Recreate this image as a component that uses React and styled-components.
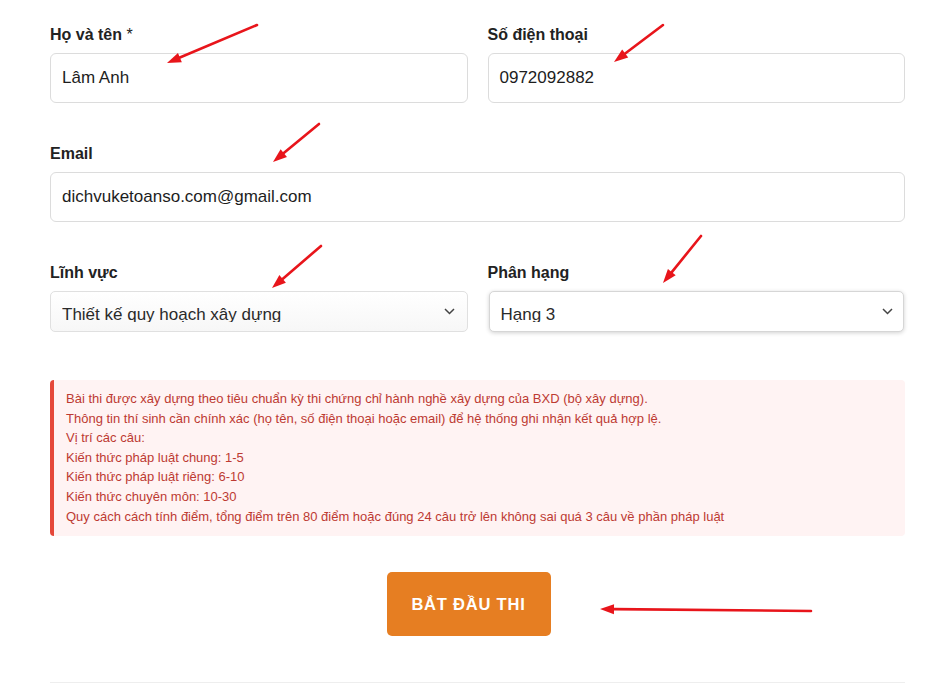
import React from "react";
import styled, { createGlobalStyle } from "styled-components";

const GlobalStyle = createGlobalStyle`
  body {
    margin: 0;
    background: #fff;
    font-family: "Liberation Sans", Arial, sans-serif;
  }
`;

const Page = styled.div`
  position: relative;
  width: 952px;
  height: 685px;
  overflow: hidden;
`;

const Form = styled.div`
  width: 855px;
  margin-left: 50px;
  padding-top: 24px;
`;

const Row = styled.div`
  display: grid;
  grid-template-columns: ${p => (p.$cols === 2 ? "1fr 1fr" : "1fr")};
  column-gap: 20px;
  margin-bottom: ${p => p.$gap ?? 40}px;
`;

const Field = styled.div`
  display: flex;
  flex-direction: column;
`;

const Label = styled.label`
  font-size: 16px;
  line-height: 21px;
  font-weight: 700;
  color: #222;
  margin-bottom: 8px;
`;

const Required = styled.span`
  font-weight: 400;
`;

const Input = styled.div`
  height: 50px;
  box-sizing: border-box;
  border: 1px solid #dcdcdc;
  border-radius: 6px;
  padding: 0 11px;
  display: flex;
  align-items: center;
  font-size: 17px;
  color: #1d1d1d;
`;

const SelectBox = styled.div`
  height: 41px;
  box-sizing: border-box;
  border: 1px solid ${p => (p.$focused ? "#d6d6d6" : "#e0e0e0")};
  border-radius: 5px;
  padding: 0 ${p => (p.$focused ? 10 : 12)}px 0 11px;
  display: flex;
  align-items: flex-start;
  justify-content: space-between;
  background: ${p => (p.$focused ? "#fff" : "linear-gradient(#fff, #f7f7f7)")};
  box-shadow: ${p => (p.$focused ? "0 1px 4px rgba(0,0,0,0.18)" : "none")};
  margin-left: ${p => (p.$focused ? "1px" : "0")};
  margin-right: ${p => (p.$focused ? "1px" : "0")};
`;

const SelectValue = styled.span`
  margin-top: 13px;
  height: 17px;
  line-height: 20px;
  overflow: hidden;
  font-size: 17px;
  color: #2a2a2a;
`;

const Chevron = styled.svg`
  margin-top: 16px;
  flex: none;
`;

const Notice = styled.div`
  margin-top: 48px;
  background: #fff3f3;
  border-left: 4px solid #e5483a;
  border-radius: 4px;
  padding: 9px 12px 10px;
  font-size: 13px;
  line-height: 19.6px;
  color: #bd3a32;
`;

const Actions = styled.div`
  display: flex;
  justify-content: center;
  margin-top: 36px;
  padding-right: 18px;
`;

const StartButton = styled.button`
  width: 164px;
  height: 64px;
  border: none;
  border-radius: 5px;
  background: #e67e22;
  color: #fff;
  font-family: "Liberation Sans", Arial, sans-serif;
  font-size: 16.5px;
  font-weight: 700;
  letter-spacing: 0.8px;
  text-transform: uppercase;
`;

const Divider = styled.hr`
  margin: 46px 0 0;
  border: none;
  border-top: 1px solid #eeeeee;
`;

const Overlay = styled.svg`
  position: absolute;
  top: 0;
  left: 0;
  pointer-events: none;
`;

const arrows = [
  [257, 25, 167, 63],
  [663, 25, 614, 62],
  [319, 124, 273, 162],
  [321, 246, 272, 288],
  [701, 236, 663, 283],
  [811, 611, 600, 609],
];

const Arrow = ({ x1, y1, x2, y2 }) => {
  const a = Math.atan2(y2 - y1, x2 - x1);
  const len = 14;
  const w = 5;
  const bx = x2 - len * Math.cos(a);
  const by = y2 - len * Math.sin(a);
  const px = -Math.sin(a) * w;
  const py = Math.cos(a) * w;
  return (
    <g>
      <line x1={x1} y1={y1} x2={bx} y2={by} stroke="#e8151b" strokeWidth="2.6" strokeLinecap="round" />
      <polygon
        points={`${x2},${y2} ${bx + px},${by + py} ${bx - px},${by - py}`}
        fill="#e8151b"
      />
    </g>
  );
};

const ChevronDown = () => (
  <Chevron width="11" height="7" viewBox="0 0 11 7">
    <polyline points="1,1 5.5,5.5 10,1" fill="none" stroke="#444" strokeWidth="1.5" />
  </Chevron>
);

const notes = [
  "Bài thi được xây dựng theo tiêu chuẩn kỳ thi chứng chỉ hành nghề xây dựng của BXD (bộ xây dựng).",
  "Thông tin thí sinh cần chính xác (họ tên, số điện thoại hoặc email) để hệ thống ghi nhận kết quả hợp lệ.",
  "Vị trí các câu:",
  "Kiến thức pháp luật chung: 1-5",
  "Kiến thức pháp luật riêng: 6-10",
  "Kiến thức chuyên môn: 10-30",
  "Quy cách cách tính điểm, tổng điểm trên 80 điểm hoặc đúng 24 câu trở lên không sai quá 3 câu về phần pháp luật",
];

export default function App() {
  return (
    <Page>
      <GlobalStyle />
      <Form>
        <Row $cols={2}>
          <Field>
            <Label>
              Họ và tên <Required>*</Required>
            </Label>
            <Input>Lâm Anh</Input>
          </Field>
          <Field>
            <Label>Số điện thoại</Label>
            <Input>0972092882</Input>
          </Field>
        </Row>
        <Row>
          <Field>
            <Label>Email</Label>
            <Input>dichvuketoanso.com@gmail.com</Input>
          </Field>
        </Row>
        <Row $cols={2} $gap={0}>
          <Field>
            <Label>Lĩnh vực</Label>
            <SelectBox>
              <SelectValue>Thiết kế quy hoạch xây dựng</SelectValue>
              <ChevronDown />
            </SelectBox>
          </Field>
          <Field>
            <Label>Phân hạng</Label>
            <SelectBox $focused>
              <SelectValue>Hạng 3</SelectValue>
              <ChevronDown />
            </SelectBox>
          </Field>
        </Row>
        <Notice>
          {notes.map(n => (
            <div key={n}>{n}</div>
          ))}
        </Notice>
        <Actions>
          <StartButton>Bắt đầu thi</StartButton>
        </Actions>
        <Divider />
      </Form>
      <Overlay width="952" height="685">
        {arrows.map(([x1, y1, x2, y2], i) => (
          <Arrow key={i} x1={x1} y1={y1} x2={x2} y2={y2} />
        ))}
      </Overlay>
    </Page>
  );
}
